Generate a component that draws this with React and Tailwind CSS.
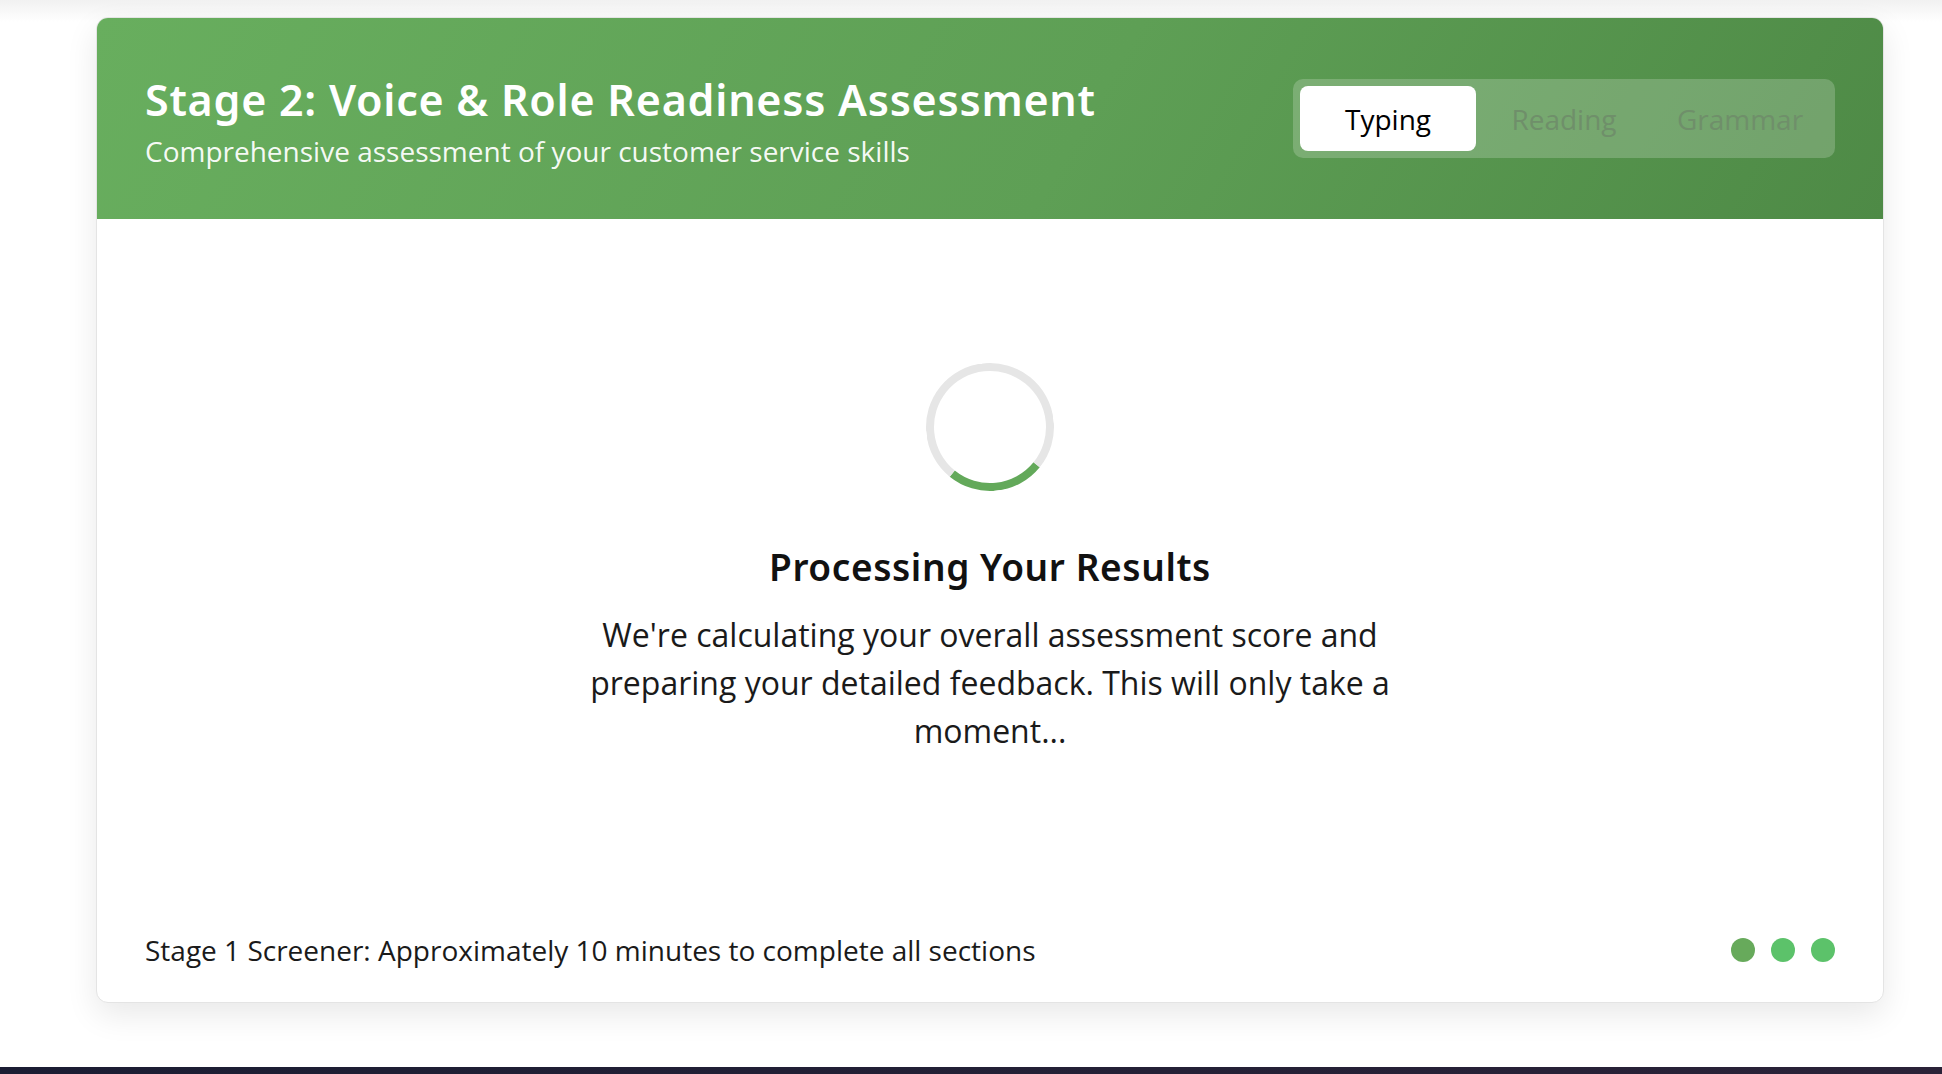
const tabs = ["Typing", "Reading", "Grammar"];

export default function App() {
  const active = "Typing";

  return (
    <div className="flex h-[1074px] flex-col bg-[linear-gradient(#f1f1f1,#ffffff_22px)] font-['Open_Sans',sans-serif]">
      <div className="flex-1 pt-[17px] pl-[96px] pr-[58px]">
        <div className="w-[1788px] overflow-hidden rounded-xl border border-[#e4e4e4] bg-white shadow-[0_12px_32px_rgba(0,0,0,0.09)]">
          {/* Header */}
          <div className="flex h-[201px] items-center justify-between bg-[linear-gradient(120deg,#68ae5e,#5e9f55_55%,#4e8a46)] px-12">
            <div className="pt-[7px]">
              <h1 className="font-['Noto_Sans',sans-serif] text-[43px] leading-[52px] font-semibold tracking-[0.75px] text-white">
                Stage 2: Voice &amp; Role Readiness Assessment
              </h1>
              <p className="mt-[6px] text-[28px] leading-[38px] text-white/95">
                Comprehensive assessment of your customer service skills
              </p>
            </div>
            <div className="flex rounded-[10px] bg-white/20 p-[7px]">
              {tabs.map((t) => (
                <button
                  key={t}
                  className={
                    t === active
                      ? "h-[65px] w-[176px] rounded-lg bg-white text-[28px] leading-[60px] text-black"
                      : "h-[65px] w-[176px] rounded-lg text-[28px] leading-[60px] text-[#6f8f6a]"
                  }
                >
                  {t}
                </button>
              ))}
            </div>
          </div>

          {/* Body */}
          <div className="flex flex-col px-12 pt-[144px] pb-[34px]">
            <div className="flex flex-col items-center">
              <div className="h-32 w-32 -rotate-6 rounded-full border-8 border-[#e6e6e6] border-b-[#63a95a]" />
              <h2 className="mt-[52px] font-['Noto_Sans',sans-serif] text-[37px] leading-[48px] font-semibold tracking-[0.6px] text-[#111]">
                Processing Your Results
              </h2>
              <p className="mt-[20px] max-w-[806px] text-center text-[32px] leading-[48px] text-[#1a1a1a]">
                We're calculating your overall assessment score and preparing your detailed feedback. This will only take a moment...
              </p>
            </div>

            <div className="mt-[177px] flex items-center justify-between">
              <p className="text-[28px] leading-[36px] text-[#1a1a1a]">
                Stage 1 Screener: Approximately 10 minutes to complete all sections
              </p>
              <div className="flex gap-4">
                <span className="h-6 w-6 rounded-full bg-[#67aa5b]" />
                <span className="h-6 w-6 rounded-full bg-[#5cc26a]" />
                <span className="h-6 w-6 rounded-full bg-[#5cc26a]" />
              </div>
            </div>
          </div>
        </div>
      </div>
      <div className="h-[7px] bg-[linear-gradient(90deg,#1b1d33,#2a2238)]" />
    </div>
  );
}
